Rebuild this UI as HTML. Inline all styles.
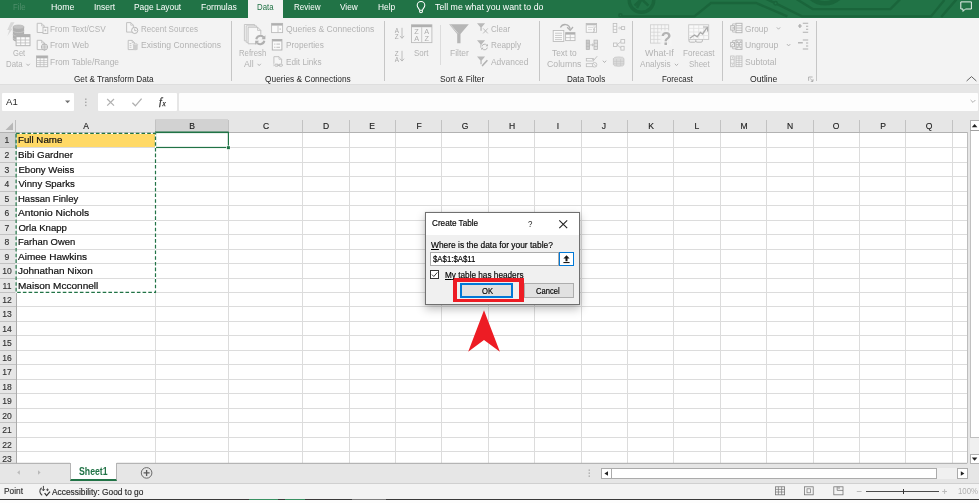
<!DOCTYPE html>
<html><head><meta charset="utf-8"><title>Excel</title>
<style>
html,body{margin:0;padding:0;background:#fff;}
body{width:979px;height:503px;overflow:hidden;position:relative;font-family:"Liberation Sans",sans-serif;}
#app{position:absolute;left:0;top:0;width:979px;height:503px;overflow:hidden;background:#e6e6e6;will-change:transform;}
.a{position:absolute;}
.t{position:absolute;white-space:nowrap;line-height:14px;height:14px;transform-origin:0 50%;}
u{text-decoration:underline;text-underline-offset:0.6px;text-decoration-thickness:0.8px;}
svg{position:absolute;overflow:visible;}
</style></head><body><div id="app">

<div class="a" style="left:0;top:0;width:979px;height:17.6px;background:#217346"></div>
<svg style="left:0;top:0" width="979" height="18" viewBox="0 0 979 18" fill="none">
<g stroke="#1a653b" stroke-width="2.4">
<circle cx="641.5" cy="0" r="12.3" stroke-width="3.4"/>
<path d="M634.6 5.6 L641.5 -1 L648.4 5.6 M641.5 -1 L637 8" stroke-width="2.6"/>
<circle cx="620.4" cy="15.3" r="1.5" stroke-width="1.6"/>
<path d="M622 16.4 H694.4 L711 3 H756 L787.4 16.4"/>
<circle cx="775.6" cy="3.3" r="1.7" stroke-width="1.5"/>
<path d="M764 -2 L774.2 2.6 M777.2 4.2 L802 16.4 H931 L944.4 0"/>
<path d="M796.4 -1 L812.7 9.1 H890.4 L900 -0.6"/>
<circle cx="825" cy="-18.1" r="21.4" stroke-width="4.6"/>
<path d="M941.2 17 L956.4 -0.6"/>
</g>
<!-- lightbulb -->
<g stroke="#fff" stroke-width="1.05" stroke-linejoin="round">
<path d="M419.5 10.3 C419.5 8.7 417.2 7.9 417.2 5.3 A3.8 3.8 0 0 1 424.8 5.3 C424.8 7.9 422.5 8.7 422.5 10.3 Z"/>
<path d="M419.6 10.4 V11.5 Q419.6 12.7 421 12.7 Q422.4 12.7 422.4 11.5 V10.4"/>
</g>
<!-- comments icon -->
<path d="M960.8 1.9 H971.4 V9 H965.4 L963 11.4 V9 H960.8 Z" stroke="#fff" stroke-width="0.9"/>
</svg>

<div class="a" style="left:0;top:18px;width:979px;height:67px;background:#f3f3f3"></div>
<div class="a" style="left:0;top:84px;width:979px;height:1px;background:#dedede"></div>
<div class="a" style="left:247.5px;top:0;width:35.5px;height:18.5px;background:#f3f3f3"></div>
<div class="a" style="left:231.0px;top:21px;width:1px;height:60px;background:#c6c6c6"></div>
<div class="a" style="left:384.1px;top:21px;width:1px;height:60px;background:#c6c6c6"></div>
<div class="a" style="left:539.1px;top:21px;width:1px;height:60px;background:#c6c6c6"></div>
<div class="a" style="left:632.0px;top:21px;width:1px;height:60px;background:#c6c6c6"></div>
<div class="a" style="left:721.9px;top:21px;width:1px;height:60px;background:#c6c6c6"></div>
<div class="a" style="left:816.1px;top:21px;width:1px;height:60px;background:#c6c6c6"></div>
<div class="a" style="left:440px;top:25px;width:1px;height:40px;background:#dcdcdc"></div>
<div class="a" style="left:2px;top:93px;width:72px;height:18px;background:#fff;border-radius:1px"></div>
<div class="a" style="left:97.5px;top:93px;width:79px;height:18px;background:#fff;border-radius:1px"></div>
<div class="a" style="left:179px;top:93px;width:799px;height:18px;background:#fdfdfd;border-radius:1px"></div>
<svg style="left:0;top:0" width="979" height="130" viewBox="0 0 979 130" fill="none">
<!-- name box dropdown -->
<path d="M65 100.5 H70.2 L67.6 103.3 Z" fill="#707070"/>
<!-- dots -->
<rect x="85.1" y="98.5" width="1.4" height="1.4" fill="#a4a4a4"/><rect x="85.1" y="101.6" width="1.4" height="1.4" fill="#a4a4a4"/><rect x="85.1" y="104.7" width="1.4" height="1.4" fill="#a4a4a4"/>
<!-- X -->
<path d="M107.2 99 L114 105.6 M114 99 L107.2 105.6" stroke="#b0b0b0" stroke-width="1.2"/>
<!-- check -->
<path d="M132.4 102.8 L135.4 105.8 L141.6 98.6" stroke="#b0b0b0" stroke-width="1.3"/>
<!-- fx -->
<text x="159" y="105.2" font-family="Liberation Serif, serif" font-style="italic" font-size="10.5" fill="#333" stroke="#333" stroke-width="0.25">f</text>
<text x="162.6" y="106" font-family="Liberation Serif, serif" font-style="italic" font-size="7.2" fill="#333" stroke="#333" stroke-width="0.25">x</text>
<!-- formula expand chevron -->
<path d="M970.6 100 L973 102.4 L975.4 100" stroke="#9a9a9a" stroke-width="0.8"/>
</svg>

<div class="a" style="left:16.3px;top:132.5px;width:950.7px;height:330.8px;background:#fff"></div>
<div class="a" style="left:155px;top:118.5px;width:73.4px;height:13.5px;background:#d2d2d2"></div>
<div class="a" style="left:0;top:133.3px;width:16px;height:14.47px;background:#d2d2d2"></div>
<div class="a" style="left:16.6px;top:133.8px;width:138.2px;height:13.870000000000001px;background:#ffd966"></div>
<svg class="a" style="left:0;top:0" width="979" height="503" viewBox="0 0 979 503">
<rect x="16.3" y="147" width="950.7" height="1" fill="#dcdcdc"/>
<rect x="0" y="147" width="16.3" height="1" fill="#c2c2c2"/>
<rect x="16.3" y="162" width="950.7" height="1" fill="#dcdcdc"/>
<rect x="0" y="162" width="16.3" height="1" fill="#c2c2c2"/>
<rect x="16.3" y="176" width="950.7" height="1" fill="#dcdcdc"/>
<rect x="0" y="176" width="16.3" height="1" fill="#c2c2c2"/>
<rect x="16.3" y="191" width="950.7" height="1" fill="#dcdcdc"/>
<rect x="0" y="191" width="16.3" height="1" fill="#c2c2c2"/>
<rect x="16.3" y="205" width="950.7" height="1" fill="#dcdcdc"/>
<rect x="0" y="205" width="16.3" height="1" fill="#c2c2c2"/>
<rect x="16.3" y="220" width="950.7" height="1" fill="#dcdcdc"/>
<rect x="0" y="220" width="16.3" height="1" fill="#c2c2c2"/>
<rect x="16.3" y="234" width="950.7" height="1" fill="#dcdcdc"/>
<rect x="0" y="234" width="16.3" height="1" fill="#c2c2c2"/>
<rect x="16.3" y="249" width="950.7" height="1" fill="#dcdcdc"/>
<rect x="0" y="249" width="16.3" height="1" fill="#c2c2c2"/>
<rect x="16.3" y="263" width="950.7" height="1" fill="#dcdcdc"/>
<rect x="0" y="263" width="16.3" height="1" fill="#c2c2c2"/>
<rect x="16.3" y="278" width="950.7" height="1" fill="#dcdcdc"/>
<rect x="0" y="278" width="16.3" height="1" fill="#c2c2c2"/>
<rect x="16.3" y="292" width="950.7" height="1" fill="#dcdcdc"/>
<rect x="0" y="292" width="16.3" height="1" fill="#c2c2c2"/>
<rect x="16.3" y="306" width="950.7" height="1" fill="#dcdcdc"/>
<rect x="0" y="306" width="16.3" height="1" fill="#c2c2c2"/>
<rect x="16.3" y="321" width="950.7" height="1" fill="#dcdcdc"/>
<rect x="0" y="321" width="16.3" height="1" fill="#c2c2c2"/>
<rect x="16.3" y="335" width="950.7" height="1" fill="#dcdcdc"/>
<rect x="0" y="335" width="16.3" height="1" fill="#c2c2c2"/>
<rect x="16.3" y="350" width="950.7" height="1" fill="#dcdcdc"/>
<rect x="0" y="350" width="16.3" height="1" fill="#c2c2c2"/>
<rect x="16.3" y="364" width="950.7" height="1" fill="#dcdcdc"/>
<rect x="0" y="364" width="16.3" height="1" fill="#c2c2c2"/>
<rect x="16.3" y="379" width="950.7" height="1" fill="#dcdcdc"/>
<rect x="0" y="379" width="16.3" height="1" fill="#c2c2c2"/>
<rect x="16.3" y="393" width="950.7" height="1" fill="#dcdcdc"/>
<rect x="0" y="393" width="16.3" height="1" fill="#c2c2c2"/>
<rect x="16.3" y="408" width="950.7" height="1" fill="#dcdcdc"/>
<rect x="0" y="408" width="16.3" height="1" fill="#c2c2c2"/>
<rect x="16.3" y="422" width="950.7" height="1" fill="#dcdcdc"/>
<rect x="0" y="422" width="16.3" height="1" fill="#c2c2c2"/>
<rect x="16.3" y="437" width="950.7" height="1" fill="#dcdcdc"/>
<rect x="0" y="437" width="16.3" height="1" fill="#c2c2c2"/>
<rect x="16.3" y="451" width="950.7" height="1" fill="#dcdcdc"/>
<rect x="0" y="451" width="16.3" height="1" fill="#c2c2c2"/>
<rect x="155" y="132.5" width="1" height="330.8" fill="#dcdcdc"/>
<rect x="155" y="120" width="1" height="12" fill="#c2c2c2"/>
<rect x="228" y="132.5" width="1" height="330.8" fill="#dcdcdc"/>
<rect x="228" y="120" width="1" height="12" fill="#c2c2c2"/>
<rect x="302" y="132.5" width="1" height="330.8" fill="#dcdcdc"/>
<rect x="302" y="120" width="1" height="12" fill="#c2c2c2"/>
<rect x="349" y="132.5" width="1" height="330.8" fill="#dcdcdc"/>
<rect x="349" y="120" width="1" height="12" fill="#c2c2c2"/>
<rect x="395" y="132.5" width="1" height="330.8" fill="#dcdcdc"/>
<rect x="395" y="120" width="1" height="12" fill="#c2c2c2"/>
<rect x="441" y="132.5" width="1" height="330.8" fill="#dcdcdc"/>
<rect x="441" y="120" width="1" height="12" fill="#c2c2c2"/>
<rect x="488" y="132.5" width="1" height="330.8" fill="#dcdcdc"/>
<rect x="488" y="120" width="1" height="12" fill="#c2c2c2"/>
<rect x="534" y="132.5" width="1" height="330.8" fill="#dcdcdc"/>
<rect x="534" y="120" width="1" height="12" fill="#c2c2c2"/>
<rect x="581" y="132.5" width="1" height="330.8" fill="#dcdcdc"/>
<rect x="581" y="120" width="1" height="12" fill="#c2c2c2"/>
<rect x="627" y="132.5" width="1" height="330.8" fill="#dcdcdc"/>
<rect x="627" y="120" width="1" height="12" fill="#c2c2c2"/>
<rect x="673" y="132.5" width="1" height="330.8" fill="#dcdcdc"/>
<rect x="673" y="120" width="1" height="12" fill="#c2c2c2"/>
<rect x="720" y="132.5" width="1" height="330.8" fill="#dcdcdc"/>
<rect x="720" y="120" width="1" height="12" fill="#c2c2c2"/>
<rect x="766" y="132.5" width="1" height="330.8" fill="#dcdcdc"/>
<rect x="766" y="120" width="1" height="12" fill="#c2c2c2"/>
<rect x="813" y="132.5" width="1" height="330.8" fill="#dcdcdc"/>
<rect x="813" y="120" width="1" height="12" fill="#c2c2c2"/>
<rect x="859" y="132.5" width="1" height="330.8" fill="#dcdcdc"/>
<rect x="859" y="120" width="1" height="12" fill="#c2c2c2"/>
<rect x="905" y="132.5" width="1" height="330.8" fill="#dcdcdc"/>
<rect x="905" y="120" width="1" height="12" fill="#c2c2c2"/>
<rect x="952" y="132.5" width="1" height="330.8" fill="#dcdcdc"/>
<rect x="952" y="120" width="1" height="12" fill="#c2c2c2"/>
<rect x="15" y="120" width="1" height="12" fill="#bdbdbd"/>
<rect x="0" y="132" width="967.0" height="1" fill="#b2b2b2"/>
<rect x="16" y="132" width="1" height="331.3" fill="#ababab"/>
<rect x="967" y="132" width="1" height="331.3" fill="#bdbdbd"/>
<rect x="0" y="462.8" width="70" height="1" fill="#a9a9a9"/>
<rect x="116.7" y="462.8" width="850.3" height="1" fill="#a9a9a9"/>
<path d="M13 122.5 L13 130 L5.5 130 Z" fill="#b7b7b7"/>
<rect x="155" y="131.6" width="73.4" height="1.5" fill="#217346"/>
<rect x="15.2" y="133.3" width="1.4" height="14.47" fill="#217346"/>
<rect x="155.5" y="132.4" width="72.9" height="15.07" fill="none" stroke="#217346" stroke-width="1.2"/>
<rect x="226.2" y="145.57000000000002" width="4" height="4" fill="#fff"/>
<rect x="226.9" y="146.17000000000002" width="3" height="3" fill="#217346"/>
<path d="M16.1 133.4 H155.5 V292.47 H16.1 Z" fill="none" stroke="#fff" stroke-width="1.2"/>
<path d="M16.1 133.4 H155.5 V292.47 H16.1 Z" fill="none" stroke="#217346" stroke-width="1.2" stroke-dasharray="3.6 2.1"/>
</svg>
<div class="a" style="left:970px;top:120px;width:9px;height:343.5px;background:#f0f0f0"></div>
<div class="a" style="left:970px;top:120px;width:11px;height:11px;background:#fff;border:1px solid #b0b0b0;border-bottom:1.5px solid #a0a0a0;box-sizing:border-box"></div>
<div class="a" style="left:970px;top:131px;width:11px;height:307px;background:#fff;border:1px solid #c0c0c0;border-top:none;box-sizing:border-box"></div>
<div class="a" style="left:970px;top:453.5px;width:11px;height:10px;background:#fff;border:1px solid #b0b0b0;box-sizing:border-box"></div>
<svg style="left:970px;top:120px" width="9" height="11"><path d="M1.8 7.3 L7.4 7.3 L4.6 3.9 Z" fill="#222"/></svg>
<svg style="left:970px;top:453.5px" width="9" height="10"><path d="M1.8 3.4 L7.4 3.4 L4.6 6.8 Z" fill="#222"/></svg>
<div class="a" style="left:0;top:463.8px;width:979px;height:19px;background:#e6e6e6"></div>
<div class="a" style="left:70px;top:463px;width:47px;height:18px;background:#fff;border-bottom:2px solid #217346;border-left:1px solid #b4b4b4;border-right:1px solid #b4b4b4;box-sizing:border-box"></div>
<div class="a" style="left:601px;top:468px;width:10.5px;height:11px;background:#fff;border:1px solid #ababab;box-sizing:border-box"></div>
<div class="a" style="left:611px;top:468px;width:325.5px;height:11px;background:#fff;border:1px solid #ababab;box-sizing:border-box"></div>
<div class="a" style="left:957px;top:468px;width:10.5px;height:11px;background:#fff;border:1px solid #ababab;box-sizing:border-box"></div>
<div class="a" style="left:936.5px;top:468px;width:20.5px;height:11px;background:#f0f0f0"></div>
<svg style="left:601px;top:468px" width="11" height="11"><path d="M7 3.2 L7 7.8 L3.4 5.5 Z" fill="#222"/></svg>
<svg style="left:957px;top:468px" width="11" height="11"><path d="M3.8 3.2 L3.8 7.8 L7.4 5.5 Z" fill="#222"/></svg>
<div class="a" style="left:0;top:483px;width:979px;height:16px;background:#f3f3f3;border-top:1px solid #d0d0d0;box-sizing:border-box"></div>
<div class="a" style="left:0;top:498.6px;width:979px;height:1.3px;background:#3a3a3a"></div>
<div class="a" style="left:0;top:499.9px;width:979px;height:4px;background:#fdfdfd"></div>
<div class="a" style="left:249.3px;top:498.6px;width:28.5px;height:1.3px;background:#3a9163"></div>
<div class="a" style="left:284.8px;top:498.6px;width:20.6px;height:1.3px;background:#3a9163"></div>
<div class="a" style="left:352px;top:498.6px;width:34px;height:1.3px;background:#7d7d7d"></div>
<svg style="left:0;top:440px" width="979" height="63" viewBox="0 440 979 63" fill="none">
<!-- sheet nav arrows -->
<path d="M19.8 470.2 V474.8 L17.2 472.5 Z" fill="#b9b9b9"/>
<path d="M38 470.2 V474.8 L40.6 472.5 Z" fill="#b9b9b9"/>
<!-- add sheet -->
<circle cx="146.6" cy="472.9" r="5.3" stroke="#6a6a6a" stroke-width="1"/>
<path d="M143.6 472.9 H149.6 M146.6 469.9 V475.9" stroke="#5a5a5a" stroke-width="1.3"/>
<!-- splitter dots -->
<rect x="588.7" y="469.4" width="1" height="1.6" fill="#a0a0a0"/><rect x="588.7" y="472.4" width="1" height="1.6" fill="#a0a0a0"/><rect x="588.7" y="475.4" width="1" height="1.6" fill="#a0a0a0"/>
<!-- accessibility icon -->
<path d="M41.6 487.8 A4.4 4.4 0 0 0 42.2 495.2" stroke="#444" stroke-width="1.1"/>
<path d="M43.4 485.9 V490.6 M41.9 489.2 L43.4 490.8 L44.9 489.2" stroke="#444" stroke-width="1"/>
<path d="M46.2 489.8 H48.8 M47.5 488.5 V491.1" stroke="#444" stroke-width="0.9"/>
<path d="M44.6 493.2 L46.6 495.6 L50 491.6" stroke="#333" stroke-width="1.2"/>
<!-- view icons -->
<rect x="775.4" y="486.8" width="9.2" height="8" stroke="#777" stroke-width="0.8"/>
<path d="M775.4 489.4 h9.2 M775.4 492 h9.2 M778.4 486.8 v8 M781.6 486.8 v8" stroke="#777" stroke-width="0.7"/>
<rect x="804.4" y="486.8" width="8.8" height="8" stroke="#777" stroke-width="0.8"/>
<rect x="807" y="488.8" width="3.6" height="4" stroke="#777" stroke-width="0.7"/>
<rect x="833.8" y="486.8" width="9.2" height="8" stroke="#777" stroke-width="0.8"/>
<path d="M837.2 486.8 V490.4 H843 M839 486.8 V489" stroke="#777" stroke-width="0.8"/>
<!-- zoom slider -->
<path d="M856.8 491.5 H861.6" stroke="#bbbbbb" stroke-width="1"/>
<path d="M866 491.5 H939" stroke="#4a4a4a" stroke-width="1"/>
<path d="M903.5 489 V494" stroke="#333" stroke-width="1"/>
<path d="M942.2 491.5 H947 M944.6 489.1 V493.9" stroke="#bbbbbb" stroke-width="1"/>
</svg>

<svg style="left:0;top:0" width="979" height="503" viewBox="0 0 979 503" fill="none" stroke-linejoin="miter">
<path d="M10.8 22.2 H14.5 L10.9 28.4 H12.8 L7.4 35.9 L9.3 30 H7.2 Z" fill="#d9d9d9"/>
<path d="M12.9 27 V39.6 A5.6 2 0 0 0 24.1 39.6 V27 Z" fill="#b0b0b0"/>
<ellipse cx="18.5" cy="27" rx="5.6" ry="2" fill="#c4c4c4" stroke="#b0b0b0" stroke-width="0.6"/>
<path d="M12.9 30.6 A5.6 2 0 0 0 24.1 30.6" stroke="#cfcfcf" stroke-width="0.7"/>
<path d="M12.9 34.2 A5.6 2 0 0 0 24.1 34.2" stroke="#cfcfcf" stroke-width="0.7"/>
<path d="M12.9 37.8 A5.6 2 0 0 0 24.1 37.8" stroke="#cfcfcf" stroke-width="0.7"/>
<rect x="16.1" y="34.6" width="13.9" height="11.1" fill="#fbfbfb" stroke="#b0b0b0" stroke-width="0.9"/>
<rect x="16.1" y="34.6" width="13.9" height="2.6" fill="#b0b0b0"/>
<path d="M16.1 40 H30 M16.1 42.9 H30 M20.7 37 V45.7 M25.3 37 V45.7" stroke="#bcbcbc" stroke-width="0.8"/>
<path d="M26.450000000000003 63.800000000000004 L28.1 65.60000000000001 L29.75 63.800000000000004" stroke="#b0b0b0" stroke-width="0.95"/>
<path d="M37.2 23.3 H41.6 L44.2 25.900000000000002 V32.5 H37.2 Z" stroke="#bcbcbc" stroke-width="0.9" fill="#f6f6f6"/><path d="M41.6 23.3 V25.900000000000002 H44.2" stroke="#bcbcbc" stroke-width="0.7200000000000001"/>
<rect x="43" y="27.3" width="4.8" height="6.2" fill="#f6f6f6" stroke="#bcbcbc" stroke-width="0.9"/>
<rect x="44.6" y="29.4" width="1.6" height="1.8" fill="#bcbcbc"/>
<path d="M37.2 40.3 H41.6 L44.2 42.9 V49.6 H37.2 Z" stroke="#bcbcbc" stroke-width="0.9" fill="#f6f6f6"/><path d="M41.6 40.3 V42.9 H44.2" stroke="#bcbcbc" stroke-width="0.7200000000000001"/>
<circle cx="44.5" cy="47" r="3.1" fill="#f6f6f6" stroke="#b0b0b0" stroke-width="0.9"/>
<path d="M41.4 47 H47.6 M44.5 43.9 V50.1" stroke="#b0b0b0" stroke-width="0.6"/>
<ellipse cx="44.5" cy="47" rx="1.4" ry="3.1" stroke="#b0b0b0" stroke-width="0.5"/>
<rect x="36.5" y="55.9" width="11.2" height="10.8" fill="#fafafa" stroke="#bcbcbc" stroke-width="0.9"/>
<rect x="36.5" y="55.9" width="11.2" height="2.4" fill="#b0b0b0"/>
<path d="M36.5 60.6 H47.7 M36.5 62.6 H47.7 M36.5 64.6 H47.7 M40.2 58 V66.7 M43.9 58 V66.7" stroke="#bcbcbc" stroke-width="0.7"/>
<path d="M126.6 22.6 H130.8 L133.4 25.200000000000003 V32.1 H126.6 Z" stroke="#bcbcbc" stroke-width="0.9" fill="#f6f6f6"/><path d="M130.8 22.6 V25.200000000000003 H133.4" stroke="#bcbcbc" stroke-width="0.7200000000000001"/>
<circle cx="134.7" cy="30.4" r="3.1" fill="#f6f6f6" stroke="#b0b0b0" stroke-width="0.9"/>
<path d="M134.7 28.4 V30.6 H136.6" stroke="#b0b0b0" stroke-width="0.8"/>
<path d="M128.2 40.4 H132.20000000000002 L134.4 42.6 V49.6 H128.2 Z" stroke="#bcbcbc" stroke-width="0.9" fill="#f6f6f6"/><path d="M132.20000000000002 40.4 V42.6 H134.4" stroke="#bcbcbc" stroke-width="0.7200000000000001"/>
<path d="M129.6 43.5 H131.4 M129.6 45.4 H131.4 M129.6 47.3 H131.4" stroke="#bcbcbc" stroke-width="0.8"/>
<path d="M133.1 44.6 V49.2 A2.3 1 0 0 0 137.7 49.2 V44.6 Z" fill="#cdcdcd"/>
<ellipse cx="135.4" cy="44.6" rx="2.3" ry="1" fill="#dcdcdc" stroke="#c4c4c4" stroke-width="0.5"/>
<path d="M244.4 24.5 H254.6 V40.8 H244.4 Z" stroke="#bcbcbc" stroke-width="0.8" fill="#f6f6f6"/>
<path d="M246.2 25.8 H256.4 V42.3 H246.2 Z" stroke="#bcbcbc" stroke-width="0.8" fill="#f6f6f6"/>
<path d="M248.1 27.2 H257.6 L260.8 30.4 V43.8 H248.1 Z" stroke="#bcbcbc" stroke-width="0.9" fill="#f6f6f6"/>
<path d="M257.6 27.2 V30.4 H260.8" stroke="#bcbcbc" stroke-width="0.8"/>
<circle cx="260.3" cy="40" r="5.6" fill="#f3f3f3"/>
<path d="M256.3 39.2 A4.1 4.1 0 0 1 263.6 37.4" stroke="#b0b0b0" stroke-width="2.1"/>
<path d="M264.3 40.8 A4.1 4.1 0 0 1 257 42.6" stroke="#b0b0b0" stroke-width="2.1"/>
<path d="M265.4 35.3 V39.2 H261.5 Z" fill="#b0b0b0"/>
<path d="M255.2 44.7 V40.8 H259.1 Z" fill="#b0b0b0"/>
<path d="M257.55 63.800000000000004 L259.2 65.60000000000001 L260.84999999999997 63.800000000000004" stroke="#b0b0b0" stroke-width="0.95"/>
<rect x="271.6" y="23.4" width="11" height="9.2" fill="#fafafa" stroke="#bcbcbc" stroke-width="0.9"/>
<rect x="271.6" y="23.4" width="11" height="2.2" fill="#b0b0b0"/>
<path d="M278 25.6 V32.6" stroke="#bcbcbc" stroke-width="0.8"/>
<rect x="279.4" y="28.3" width="1.6" height="1.6" fill="#d2d2d2"/>
<rect x="272.3" y="39.5" width="9.6" height="10.5" fill="#fafafa" stroke="#b0b0b0" stroke-width="0.9"/>
<rect x="272.3" y="39.5" width="9.6" height="1.9" fill="#b0b0b0"/>
<path d="M274.2 44.1 h1.2 M276.4 44.1 H280 M274.2 47.3 h1.2 M276.4 47.3 H280" stroke="#b0b0b0" stroke-width="0.8"/>
<path d="M273.9 56.7 H279.0 L281.6 59.300000000000004 V66.2 H273.9 Z" stroke="#bcbcbc" stroke-width="0.9" fill="#f6f6f6"/><path d="M279.0 56.7 V59.300000000000004 H281.6" stroke="#bcbcbc" stroke-width="0.7200000000000001"/>
<rect x="273.6" y="63.6" width="9.6" height="3.4" fill="#f3f3f3"/>
<rect x="274.7" y="64.2" width="3.6" height="2" rx="1" stroke="#b0b0b0" stroke-width="0.8"/>
<rect x="278.9" y="64.2" width="3.6" height="2" rx="1" stroke="#b0b0b0" stroke-width="0.8"/>
<path d="M277.3 65.2 H280" stroke="#b0b0b0" stroke-width="0.8"/>
<text x="396.8" y="32.8" font-family="Liberation Sans, sans-serif" font-size="6.3" fill="#a9a9a9" text-anchor="middle" font-weight="normal" stroke="none">A</text>
<text x="396.8" y="38.8" font-family="Liberation Sans, sans-serif" font-size="6.3" fill="#a9a9a9" text-anchor="middle" font-weight="normal" stroke="none">Z</text>
<path d="M402 27.8 V38.2 M399.9 35.9 L402 38.3 L404.1 35.9" stroke="#b0b0b0" stroke-width="0.8"/>
<text x="396.8" y="55.6" font-family="Liberation Sans, sans-serif" font-size="6.3" fill="#a9a9a9" text-anchor="middle" font-weight="normal" stroke="none">Z</text>
<text x="396.8" y="61.6" font-family="Liberation Sans, sans-serif" font-size="6.3" fill="#a9a9a9" text-anchor="middle" font-weight="normal" stroke="none">A</text>
<path d="M402 50.8 V61 M399.9 58.7 L402 61.1 L404.1 58.7" stroke="#b0b0b0" stroke-width="0.8"/>
<rect x="411.5" y="24.8" width="20.4" height="17.8" fill="#f5f5f5" stroke="#bcbcbc" stroke-width="0.9"/>
<rect x="411.5" y="24.8" width="20.4" height="2.4" fill="#b0b0b0"/>
<path d="M421.7 27.2 V42.6" stroke="#bcbcbc" stroke-width="0.8"/>
<text x="416.6" y="34.2" font-family="Liberation Sans, sans-serif" font-size="7.3" fill="#adadad" text-anchor="middle" font-weight="normal" stroke="none">Z</text>
<text x="416.6" y="41.0" font-family="Liberation Sans, sans-serif" font-size="7.3" fill="#adadad" text-anchor="middle" font-weight="normal" stroke="none">A</text>
<text x="426.8" y="34.2" font-family="Liberation Sans, sans-serif" font-size="7.3" fill="#adadad" text-anchor="middle" font-weight="normal" stroke="none">A</text>
<text x="426.8" y="41.0" font-family="Liberation Sans, sans-serif" font-size="7.3" fill="#adadad" text-anchor="middle" font-weight="normal" stroke="none">Z</text>
<path d="M449.1 24.2 H468.8 L460.5 33.9 V43.2 H457.2 V33.9 Z" fill="#b6b6b6"/>
<path d="M450.4 24.6 L458 33.4" stroke="#e4e4e4" stroke-width="0.7"/>
<path d="M477 23.2 H485.1 L481.7 27.2 V30.799999999999997 H480.4 V27.2 Z" fill="#b9b9b9"/>
<path d="M477 40.2 H485.1 L481.7 44.2 V47.800000000000004 H480.4 V44.2 Z" fill="#b9b9b9"/>
<path d="M477 56.6 H485.1 L481.7 60.6 V64.2 H480.4 V60.6 Z" fill="#b9b9b9"/>
<path d="M483.2 28.4 L487.8 33.4 M487.8 28.4 L483.2 33.4" stroke="#b0b0b0" stroke-width="0.8"/>
<circle cx="484.6" cy="47" r="3.6" fill="#f3f3f3"/>
<path d="M481.9 46.4 A2.8 2.8 0 0 1 486.9 45.3" stroke="#b0b0b0" stroke-width="0.9"/><path d="M487.3 47.6 A2.8 2.8 0 0 1 482.3 48.7" stroke="#b0b0b0" stroke-width="0.9"/>
<path d="M487.9 43.9 V46.2 H485.6 Z M481.3 50.1 V47.8 H483.6 Z" fill="#b0b0b0"/>
<path d="M487.4 60.2 L483 64.9 L482.2 66.2" stroke="#b0b0b0" stroke-width="1.5"/>
<rect x="553.2" y="30.5" width="10.6" height="11" fill="#fafafa" stroke="#bcbcbc" stroke-width="0.9"/>
<path d="M555 33.2 H562 M555 35.4 H562 M555 37.6 H562 M555 39.6 H562" stroke="#bcbcbc" stroke-width="0.8"/>
<rect x="565.6" y="32.6" width="9.4" height="8" fill="#fafafa" stroke="#bcbcbc" stroke-width="0.9"/>
<rect x="565.6" y="32.6" width="9.4" height="2" fill="#b0b0b0"/>
<path d="M570.3 34.6 V40.6 M565.6 37.6 H575" stroke="#bcbcbc" stroke-width="0.7"/>
<path d="M560.4 27.6 C562.5 23.2 569.6 23.2 570.2 29.6" stroke="#b0b0b0" stroke-width="1.25"/>
<path d="M567.2 27.2 L570.2 30.4 L573 27" stroke="#b0b0b0" stroke-width="1.25"/>
<rect x="586.2" y="23.5" width="10.4" height="8.8" fill="#f9f9f9" stroke="#bcbcbc" stroke-width="0.8"/>
<rect x="586.2" y="23.5" width="10.4" height="1.8" fill="#bcbcbc"/>
<path d="M588 27.4 H593 M588 29.6 H592 M594 25.5 V32.3" stroke="#d2d2d2" stroke-width="0.8"/>
<path d="M595.8 26.4 L593.4 29.6 H594.8 L593.2 32.8" stroke="#bcbcbc" stroke-width="0.8"/>
<rect x="586.2" y="40.1" width="3.4" height="9.5" fill="#c9c9c9" stroke="#b0b0b0" stroke-width="0.7"/>
<rect x="594" y="40.1" width="3.4" height="9.5" fill="#e2e2e2" stroke="#b0b0b0" stroke-width="0.7"/>
<path d="M586.2 43.2 h3.4 M586.2 46.4 h3.4 M594 43.2 h3.4 M594 46.4 h3.4" stroke="#b0b0b0" stroke-width="0.6"/>
<path d="M590.2 44.9 H593.4 M592 43.6 L593.4 44.9 L592 46.2" stroke="#b0b0b0" stroke-width="0.7"/>
<rect x="586.3" y="58.4" width="7" height="2.6" stroke="#bcbcbc" stroke-width="0.8" fill="#f6f6f6"/>
<rect x="586.3" y="63.7" width="7" height="3" stroke="#bcbcbc" stroke-width="0.8" fill="#f6f6f6"/>
<path d="M592 58.6 L593.6 60.4 L597.2 56.2" stroke="#bcbcbc" stroke-width="0.9"/>
<circle cx="594.6" cy="64.8" r="2.3" stroke="#bcbcbc" stroke-width="0.8" fill="#f3f3f3"/><path d="M593 63.2 L596.2 66.4" stroke="#bcbcbc" stroke-width="0.7"/>
<path d="M602.85 60.7 L604.5 62.5 L606.15 60.7" stroke="#b0b0b0" stroke-width="0.95"/>
<rect x="613.2" y="23.5" width="3.6" height="8.9" stroke="#bcbcbc" stroke-width="0.8" fill="#f6f6f6"/>
<path d="M613.2 26.4 h3.6 M613.2 29.4 h3.6" stroke="#bcbcbc" stroke-width="0.7"/>
<path d="M618.2 28 H620.6 M619.6 27 L620.7 28 L619.6 29" stroke="#bcbcbc" stroke-width="0.7"/>
<rect x="621.6" y="26.7" width="3.1" height="2.7" stroke="#bcbcbc" stroke-width="0.8" fill="#f6f6f6"/>
<rect x="613.4" y="43" width="3.6" height="3.5" stroke="#bcbcbc" stroke-width="0.8" fill="#f6f6f6"/>
<rect x="620.9" y="39.6" width="3.8" height="3.5" stroke="#bcbcbc" stroke-width="0.8" fill="#f6f6f6"/>
<rect x="620.9" y="46.3" width="3.2" height="3.8" stroke="#bcbcbc" stroke-width="0.8" fill="#f6f6f6"/>
<path d="M617 44.8 L620.9 41.6 M617 44.8 L620.9 48" stroke="#bcbcbc" stroke-width="0.8"/>
<path d="M613.4 58.6 V64.6 A5.3 1.7 0 0 0 624 64.6 V58.6 A5.3 1.7 0 0 0 613.4 58.6 Z" fill="#dadada" stroke="#c2c2c2" stroke-width="0.7"/>
<path d="M616.6 59 V66 M620.6 59 V66 M613.6 61.4 H624 M613.6 63.8 H624" stroke="#c4c4c4" stroke-width="0.6"/>
<rect x="650.4" y="24.8" width="18.3" height="18.3" fill="#f6f6f6" stroke="#cdcdcd" stroke-width="0.8"/>
<path d="M650.4 28.6 H668.7 M650.4 32.2 H668.7 M650.4 35.8 H668.7 M650.4 39.4 H668.7 M654 24.8 V43.1 M657.7 24.8 V43.1 M661.4 24.8 V43.1 M665 24.8 V43.1" stroke="#d3d3d3" stroke-width="0.7"/>
<rect x="660.4" y="30.4" width="11.4" height="15.4" fill="#f4f4f4" opacity="0.85"/>
<text x="666.2" y="44.6" font-family="Liberation Sans, sans-serif" font-size="17.6" font-weight="bold" fill="#b3b3b3" text-anchor="middle" stroke="none">?</text>
<path d="M674.85 63.800000000000004 L676.5 65.60000000000001 L678.15 63.800000000000004" stroke="#b0b0b0" stroke-width="0.95"/>
<rect x="688.7" y="24.8" width="20" height="14.6" fill="#f9f9f9" stroke="#c6c6c6" stroke-width="0.9"/>
<path d="M688.7 28.4 H708.7 M688.7 32 H708.7 M688.7 35.6 H708.7 M693.7 24.8 V39.4 M698.7 24.8 V39.4 M703.7 24.8 V39.4" stroke="#dedede" stroke-width="0.7"/>
<path d="M689.8 38.2 L694.5 35 L697.2 36.8 L700.4 32.4 L702.6 34 L707 27.6" stroke="#ababab" stroke-width="1.35"/>
<path d="M703.2 27 H707.6 V31.4" stroke="#ababab" stroke-width="1.2"/>
<path d="M689 39.4 V41 Q689 42.2 690.2 42.2 H694.6 Q695.8 42.2 695.8 41 V39.4 M695.8 41 Q695.8 42.2 697 42.2 H701 Q702.4 42.2 702.4 41 V39.4" stroke="#b8b8b8" stroke-width="0.95"/>
<rect x="736" y="23.3" width="6" height="9.4" fill="#f6f6f6" stroke="#b3b3b3" stroke-width="0.9"/><path d="M736 25.650000000000002 h6 M736 28.0 h6 M736 30.35 h6" stroke="#b3b3b3" stroke-width="0.8"/><rect x="730.7" y="25.7" width="3.8" height="4.4" fill="#f6f6f6" stroke="#b3b3b3" stroke-width="0.9"/><path d="M732.6 23.900000000000002 H736 M732.6 23.900000000000002 V25.7 M732.6 32.1 H736 M732.6 32.1 V30.1" stroke="#b3b3b3" stroke-width="0.7"/><path d="M731.6 27.9 h2 M732.8 26.900000000000002 l1 1 l-1 1" stroke="#b3b3b3" stroke-width="0.7"/>
<rect x="736" y="40" width="6" height="9.4" fill="#f6f6f6" stroke="#b3b3b3" stroke-width="0.9"/><path d="M736 42.35 h6 M736 44.7 h6 M736 47.05 h6" stroke="#b3b3b3" stroke-width="0.8"/><rect x="730.7" y="42.4" width="3.8" height="4.4" fill="#f6f6f6" stroke="#b3b3b3" stroke-width="0.9"/><path d="M732.6 40.6 H736 M732.6 40.6 V42.4 M732.6 48.8 H736 M732.6 48.8 V46.8" stroke="#b3b3b3" stroke-width="0.7"/><path d="M731.6 45.8 l2 -2.4" stroke="#b3b3b3" stroke-width="0.8"/><path d="M737 40.8 l4 7.8 M741 40.8 l-4 7.8" stroke="#b3b3b3" stroke-width="0.7"/>
<path d="M776.85 27.400000000000002 L778.5 29.2 L780.15 27.400000000000002" stroke="#b0b0b0" stroke-width="0.95"/>
<path d="M786.95 44.1 L788.6 45.9 L790.25 44.1" stroke="#b0b0b0" stroke-width="0.95"/>
<rect x="730.7" y="56" width="3.4" height="10.7" fill="#f6f6f6" stroke="#bcbcbc" stroke-width="0.8"/>
<path d="M730.7 59.6 h3.4 M730.7 63.2 h3.4" stroke="#bcbcbc" stroke-width="0.7"/>
<rect x="732" y="57.4" width="0.9" height="0.9" fill="#b0b0b0"/><rect x="732" y="64.4" width="0.9" height="0.9" fill="#b0b0b0"/>
<rect x="736" y="56" width="6" height="10.7" fill="#f6f6f6" stroke="#bcbcbc" stroke-width="0.8"/>
<path d="M736 58.1 h6 M736 60.3 h6 M736 62.4 h6 M736 64.6 h6 M739 56 v10.7" stroke="#bcbcbc" stroke-width="0.7"/>
<path d="M798 26 h3.8 M799.9 24.1 v3.8" stroke="#a8a8a8" stroke-width="1.2"/>
<path d="M802.8 23.2 H808.2 M806 26.3 H808.2 M806 29.3 H808.2 M802.8 32.3 H808.2" stroke="#b0b0b0" stroke-width="1.1"/>
<path d="M798 42.8 h4.8" stroke="#a8a8a8" stroke-width="1.2"/>
<path d="M802.8 40 H808.2 M806 43 H808.2 M806 46 H808.2 M802.8 49 H808.2" stroke="#b0b0b0" stroke-width="1.1"/>
<path d="M808.6 80.8 V77 H812.6" stroke="#9a9a9a" stroke-width="0.7"/><path d="M810.2 78.6 L813 81.4 M813 79.2 V81.4 H810.8" stroke="#9a9a9a" stroke-width="0.7"/>
<path d="M966.6 81 L971.5 76.6 L976.4 81" stroke="#555" stroke-width="0.9"/>
</svg>
<!-- dialog -->
<div class="a" style="left:425px;top:212px;width:155px;height:93px;background:#f0f0f0;border:1px solid #707070;box-sizing:border-box;box-shadow:0 4px 9px rgba(0,0,0,0.26),0 0 2px rgba(0,0,0,0.14)"></div>
<div class="a" style="left:426px;top:213px;width:153px;height:22px;background:#fff"></div>
<svg style="left:558.6px;top:219.5px" width="9" height="9" viewBox="0 0 9 9"><path d="M0.3 0.3 L8.2 8.2 M8.2 0.3 L0.3 8.2" stroke="#222" stroke-width="1.1" fill="none"/></svg>
<!-- input -->
<div class="a" style="left:430.3px;top:251.7px;width:129px;height:14.6px;background:#fff;border:1px solid #acacac;box-sizing:border-box"></div>
<div class="a" style="left:559.2px;top:251.7px;width:15px;height:14.6px;background:#fff;border:1px solid #0078d7;box-sizing:border-box"></div>
<svg style="left:559.2px;top:251.7px" width="15" height="14.6" viewBox="0 0 15 14.6"><path d="M7.5 3.2 L10.6 6.6 H8.5 V9.2 H6.5 V6.6 H4.4 Z" fill="#1a1a1a"/><rect x="4.4" y="10" width="6.2" height="1.1" fill="#1a1a1a"/></svg>
<!-- checkbox -->
<div class="a" style="left:430.3px;top:269.6px;width:9.2px;height:9.2px;background:#fff;border:1px solid #333;box-sizing:border-box"></div>
<svg style="left:430.3px;top:269.6px" width="9.2" height="9.2" viewBox="0 0 9.2 9.2"><path d="M2 4.6 L3.8 6.5 L7.3 2.5" stroke="#222" stroke-width="0.9" fill="none"/></svg>
<!-- red highlight -->
<div class="a" style="left:453.1px;top:278.1px;width:71px;height:23.7px;border-style:solid;border-color:#ed1c24;border-width:4.6px 5.2px 3.9px 4.6px;box-sizing:border-box"></div>
<!-- OK button -->
<div class="a" style="left:460.1px;top:282.8px;width:53.2px;height:15.2px;background:#e1e1e1;border:2px solid #0078d7;box-sizing:border-box"></div>
<!-- Cancel button -->
<div class="a" style="left:524.1px;top:283.2px;width:49.7px;height:15.1px;background:#e1e1e1;border:1px solid #adadad;box-sizing:border-box"></div>
<!-- red arrow -->
<svg style="left:0;top:0" width="979" height="503" viewBox="0 0 979 503"><path d="M484 310.2 L499.9 351.8 L484 340 L468.2 351.8 Z" fill="#ed1c24"/></svg>

<span class="t" id="t0" style="left:12.80px;top:-0.10px;font-size:9.4px;color:#4f8f6b;transform:scaleX(0.8273);">File</span>
<span class="t" id="t1" style="left:50.90px;top:-0.10px;font-size:9.4px;color:#ffffff;transform:scaleX(0.9394);">Home</span>
<span class="t" id="t2" style="left:93.80px;top:-0.10px;font-size:9.4px;color:#ffffff;transform:scaleX(0.9039);">Insert</span>
<span class="t" id="t3" style="left:134.40px;top:-0.10px;font-size:9.4px;color:#ffffff;transform:scaleX(0.8964);">Page Layout</span>
<span class="t" id="t4" style="left:201.00px;top:-0.10px;font-size:9.4px;color:#ffffff;transform:scaleX(0.9161);">Formulas</span>
<span class="t" id="t5" style="left:293.50px;top:-0.10px;font-size:9.4px;color:#ffffff;transform:scaleX(0.8618);">Review</span>
<span class="t" id="t6" style="left:339.50px;top:-0.10px;font-size:9.4px;color:#ffffff;transform:scaleX(0.8781);">View</span>
<span class="t" id="t7" style="left:377.80px;top:-0.10px;font-size:9.4px;color:#ffffff;transform:scaleX(0.8921);">Help</span>
<span class="t" id="t8" style="left:435.30px;top:-0.10px;font-size:9.4px;color:#ffffff;transform:scaleX(0.9370);">Tell me what you want to do</span>
<span class="t" id="t9" style="left:256.80px;top:-0.10px;font-size:9.4px;color:#217346;transform:scaleX(0.8328);">Data</span>
<span class="t" id="t10" style="left:50.00px;top:21.70px;font-size:9.2px;color:#b3b3b3;transform:scaleX(0.8982);">From Text/CSV</span>
<span class="t" id="t11" style="left:50.00px;top:38.00px;font-size:9.2px;color:#b3b3b3;transform:scaleX(0.9129);">From Web</span>
<span class="t" id="t12" style="left:50.00px;top:55.20px;font-size:9.2px;color:#b3b3b3;transform:scaleX(0.9149);">From Table/Range</span>
<span class="t" id="t13" style="left:140.70px;top:21.70px;font-size:9.2px;color:#b3b3b3;transform:scaleX(0.8719);">Recent Sources</span>
<span class="t" id="t14" style="left:140.70px;top:38.00px;font-size:9.2px;color:#b3b3b3;transform:scaleX(0.9336);">Existing Connections</span>
<span class="t" id="t15" style="left:285.70px;top:21.70px;font-size:9.2px;color:#b3b3b3;transform:scaleX(0.9345);">Queries &amp; Connections</span>
<span class="t" id="t16" style="left:285.70px;top:38.00px;font-size:9.2px;color:#b3b3b3;transform:scaleX(0.9027);">Properties</span>
<span class="t" id="t17" style="left:285.70px;top:55.20px;font-size:9.2px;color:#b3b3b3;transform:scaleX(0.8910);">Edit Links</span>
<span class="t" id="t18" style="left:490.70px;top:21.70px;font-size:9.2px;color:#b3b3b3;transform:scaleX(0.8694);">Clear</span>
<span class="t" id="t19" style="left:490.70px;top:38.00px;font-size:9.2px;color:#b3b3b3;transform:scaleX(0.8897);">Reapply</span>
<span class="t" id="t20" style="left:490.70px;top:55.20px;font-size:9.2px;color:#b3b3b3;transform:scaleX(0.9174);">Advanced</span>
<span class="t" id="t21" style="left:744.90px;top:21.70px;font-size:9.2px;color:#b3b3b3;transform:scaleX(0.9003);">Group</span>
<span class="t" id="t22" style="left:744.90px;top:38.00px;font-size:9.2px;color:#b3b3b3;transform:scaleX(0.9447);">Ungroup</span>
<span class="t" id="t23" style="left:744.90px;top:55.20px;font-size:9.2px;color:#b3b3b3;transform:scaleX(0.9283);">Subtotal</span>
<span class="t" id="t24" style="left:12.80px;top:46.25px;font-size:9.2px;color:#b3b3b3;transform:scaleX(0.8236);">Get</span>
<span class="t" id="t25" style="left:6.00px;top:57.05px;font-size:9.2px;color:#b3b3b3;transform:scaleX(0.8496);">Data</span>
<span class="t" id="t26" style="left:239.30px;top:46.25px;font-size:9.2px;color:#b3b3b3;transform:scaleX(0.8455);">Refresh</span>
<span class="t" id="t27" style="left:243.80px;top:57.05px;font-size:9.2px;color:#b3b3b3;transform:scaleX(0.9492);">All</span>
<span class="t" id="t28" style="left:414.40px;top:46.25px;font-size:9.2px;color:#b3b3b3;transform:scaleX(0.8601);">Sort</span>
<span class="t" id="t29" style="left:449.60px;top:46.25px;font-size:9.2px;color:#b3b3b3;transform:scaleX(0.9255);">Filter</span>
<span class="t" id="t30" style="left:552.10px;top:46.25px;font-size:9.2px;color:#b3b3b3;transform:scaleX(0.9122);">Text to</span>
<span class="t" id="t31" style="left:546.80px;top:57.05px;font-size:9.2px;color:#b3b3b3;transform:scaleX(0.9486);">Columns</span>
<span class="t" id="t32" style="left:645.30px;top:46.25px;font-size:9.2px;color:#b3b3b3;transform:scaleX(0.9727);">What-If</span>
<span class="t" id="t33" style="left:640.40px;top:57.05px;font-size:9.2px;color:#b3b3b3;transform:scaleX(0.8942);">Analysis</span>
<span class="t" id="t34" style="left:683.10px;top:46.25px;font-size:9.2px;color:#b3b3b3;transform:scaleX(0.8839);">Forecast</span>
<span class="t" id="t35" style="left:688.70px;top:57.05px;font-size:9.2px;color:#b3b3b3;transform:scaleX(0.8619);">Sheet</span>
<span class="t" id="t36" style="left:74.00px;top:72.00px;font-size:8.8px;color:#262626;transform:scaleX(0.9303);">Get &amp; Transform Data</span>
<span class="t" id="t37" style="left:265.00px;top:72.00px;font-size:8.8px;color:#262626;transform:scaleX(0.9484);">Queries &amp; Connections</span>
<span class="t" id="t38" style="left:439.80px;top:72.00px;font-size:8.8px;color:#262626;transform:scaleX(0.9540);">Sort &amp; Filter</span>
<span class="t" id="t39" style="left:566.80px;top:72.00px;font-size:8.8px;color:#262626;transform:scaleX(0.9226);">Data Tools</span>
<span class="t" id="t40" style="left:662.00px;top:72.00px;font-size:8.8px;color:#262626;transform:scaleX(0.9055);">Forecast</span>
<span class="t" id="t41" style="left:750.00px;top:72.00px;font-size:8.8px;color:#262626;transform:scaleX(0.9794);">Outline</span>
<span class="t" id="t42" style="left:5.80px;top:95.30px;font-size:9.8px;color:#262626;transform:scaleX(0.9763);">A1</span>
<span class="t" style="left:55.65px;width:60px;text-align:center;transform-origin:50% 50%;top:118.90px;font-size:9.0px;color:#222;transform:scaleX(0.95);-webkit-text-stroke:0.15px #222;">A</span>
<span class="t" style="left:161.70px;width:60px;text-align:center;transform-origin:50% 50%;top:118.90px;font-size:9.0px;color:#222;transform:scaleX(0.95);-webkit-text-stroke:0.15px #222;">B</span>
<span class="t" style="left:235.60px;width:60px;text-align:center;transform-origin:50% 50%;top:118.90px;font-size:9.0px;color:#222;transform:scaleX(0.95);-webkit-text-stroke:0.15px #222;">C</span>
<span class="t" style="left:296.00px;width:60px;text-align:center;transform-origin:50% 50%;top:118.90px;font-size:9.0px;color:#222;transform:scaleX(0.95);-webkit-text-stroke:0.15px #222;">D</span>
<span class="t" style="left:342.40px;width:60px;text-align:center;transform-origin:50% 50%;top:118.90px;font-size:9.0px;color:#222;transform:scaleX(0.95);-webkit-text-stroke:0.15px #222;">E</span>
<span class="t" style="left:388.80px;width:60px;text-align:center;transform-origin:50% 50%;top:118.90px;font-size:9.0px;color:#222;transform:scaleX(0.95);-webkit-text-stroke:0.15px #222;">F</span>
<span class="t" style="left:435.20px;width:60px;text-align:center;transform-origin:50% 50%;top:118.90px;font-size:9.0px;color:#222;transform:scaleX(0.95);-webkit-text-stroke:0.15px #222;">G</span>
<span class="t" style="left:481.60px;width:60px;text-align:center;transform-origin:50% 50%;top:118.90px;font-size:9.0px;color:#222;transform:scaleX(0.95);-webkit-text-stroke:0.15px #222;">H</span>
<span class="t" style="left:528.00px;width:60px;text-align:center;transform-origin:50% 50%;top:118.90px;font-size:9.0px;color:#222;transform:scaleX(0.95);-webkit-text-stroke:0.15px #222;">I</span>
<span class="t" style="left:574.40px;width:60px;text-align:center;transform-origin:50% 50%;top:118.90px;font-size:9.0px;color:#222;transform:scaleX(0.95);-webkit-text-stroke:0.15px #222;">J</span>
<span class="t" style="left:620.80px;width:60px;text-align:center;transform-origin:50% 50%;top:118.90px;font-size:9.0px;color:#222;transform:scaleX(0.95);-webkit-text-stroke:0.15px #222;">K</span>
<span class="t" style="left:667.20px;width:60px;text-align:center;transform-origin:50% 50%;top:118.90px;font-size:9.0px;color:#222;transform:scaleX(0.95);-webkit-text-stroke:0.15px #222;">L</span>
<span class="t" style="left:713.60px;width:60px;text-align:center;transform-origin:50% 50%;top:118.90px;font-size:9.0px;color:#222;transform:scaleX(0.95);-webkit-text-stroke:0.15px #222;">M</span>
<span class="t" style="left:760.00px;width:60px;text-align:center;transform-origin:50% 50%;top:118.90px;font-size:9.0px;color:#222;transform:scaleX(0.95);-webkit-text-stroke:0.15px #222;">N</span>
<span class="t" style="left:806.40px;width:60px;text-align:center;transform-origin:50% 50%;top:118.90px;font-size:9.0px;color:#222;transform:scaleX(0.95);-webkit-text-stroke:0.15px #222;">O</span>
<span class="t" style="left:852.80px;width:60px;text-align:center;transform-origin:50% 50%;top:118.90px;font-size:9.0px;color:#222;transform:scaleX(0.95);-webkit-text-stroke:0.15px #222;">P</span>
<span class="t" style="left:899.20px;width:60px;text-align:center;transform-origin:50% 50%;top:118.90px;font-size:9.0px;color:#222;transform:scaleX(0.95);-webkit-text-stroke:0.15px #222;">Q</span>
<span class="t" style="left:-23.10px;width:60px;text-align:center;transform-origin:50% 50%;top:132.95px;font-size:9.0px;color:#333;transform:scaleX(0.95);-webkit-text-stroke:0.15px #333;">1</span>
<span class="t" style="left:-23.10px;width:60px;text-align:center;transform-origin:50% 50%;top:147.95px;font-size:9.0px;color:#333;transform:scaleX(0.95);-webkit-text-stroke:0.15px #333;">2</span>
<span class="t" style="left:-23.10px;width:60px;text-align:center;transform-origin:50% 50%;top:162.95px;font-size:9.0px;color:#333;transform:scaleX(0.95);-webkit-text-stroke:0.15px #333;">3</span>
<span class="t" style="left:-23.10px;width:60px;text-align:center;transform-origin:50% 50%;top:176.95px;font-size:9.0px;color:#333;transform:scaleX(0.95);-webkit-text-stroke:0.15px #333;">4</span>
<span class="t" style="left:-23.10px;width:60px;text-align:center;transform-origin:50% 50%;top:191.95px;font-size:9.0px;color:#333;transform:scaleX(0.95);-webkit-text-stroke:0.15px #333;">5</span>
<span class="t" style="left:-23.10px;width:60px;text-align:center;transform-origin:50% 50%;top:205.95px;font-size:9.0px;color:#333;transform:scaleX(0.95);-webkit-text-stroke:0.15px #333;">6</span>
<span class="t" style="left:-23.10px;width:60px;text-align:center;transform-origin:50% 50%;top:220.95px;font-size:9.0px;color:#333;transform:scaleX(0.95);-webkit-text-stroke:0.15px #333;">7</span>
<span class="t" style="left:-23.10px;width:60px;text-align:center;transform-origin:50% 50%;top:234.95px;font-size:9.0px;color:#333;transform:scaleX(0.95);-webkit-text-stroke:0.15px #333;">8</span>
<span class="t" style="left:-23.10px;width:60px;text-align:center;transform-origin:50% 50%;top:249.95px;font-size:9.0px;color:#333;transform:scaleX(0.95);-webkit-text-stroke:0.15px #333;">9</span>
<span class="t" style="left:-23.10px;width:60px;text-align:center;transform-origin:50% 50%;top:263.95px;font-size:9.0px;color:#333;transform:scaleX(0.95);-webkit-text-stroke:0.15px #333;">10</span>
<span class="t" style="left:-23.10px;width:60px;text-align:center;transform-origin:50% 50%;top:278.95px;font-size:9.0px;color:#333;transform:scaleX(0.95);-webkit-text-stroke:0.15px #333;">11</span>
<span class="t" style="left:-23.10px;width:60px;text-align:center;transform-origin:50% 50%;top:292.95px;font-size:9.0px;color:#333;transform:scaleX(0.95);-webkit-text-stroke:0.15px #333;">12</span>
<span class="t" style="left:-23.10px;width:60px;text-align:center;transform-origin:50% 50%;top:306.95px;font-size:9.0px;color:#333;transform:scaleX(0.95);-webkit-text-stroke:0.15px #333;">13</span>
<span class="t" style="left:-23.10px;width:60px;text-align:center;transform-origin:50% 50%;top:321.95px;font-size:9.0px;color:#333;transform:scaleX(0.95);-webkit-text-stroke:0.15px #333;">14</span>
<span class="t" style="left:-23.10px;width:60px;text-align:center;transform-origin:50% 50%;top:335.95px;font-size:9.0px;color:#333;transform:scaleX(0.95);-webkit-text-stroke:0.15px #333;">15</span>
<span class="t" style="left:-23.10px;width:60px;text-align:center;transform-origin:50% 50%;top:350.95px;font-size:9.0px;color:#333;transform:scaleX(0.95);-webkit-text-stroke:0.15px #333;">16</span>
<span class="t" style="left:-23.10px;width:60px;text-align:center;transform-origin:50% 50%;top:364.95px;font-size:9.0px;color:#333;transform:scaleX(0.95);-webkit-text-stroke:0.15px #333;">17</span>
<span class="t" style="left:-23.10px;width:60px;text-align:center;transform-origin:50% 50%;top:379.95px;font-size:9.0px;color:#333;transform:scaleX(0.95);-webkit-text-stroke:0.15px #333;">18</span>
<span class="t" style="left:-23.10px;width:60px;text-align:center;transform-origin:50% 50%;top:393.95px;font-size:9.0px;color:#333;transform:scaleX(0.95);-webkit-text-stroke:0.15px #333;">19</span>
<span class="t" style="left:-23.10px;width:60px;text-align:center;transform-origin:50% 50%;top:408.95px;font-size:9.0px;color:#333;transform:scaleX(0.95);-webkit-text-stroke:0.15px #333;">20</span>
<span class="t" style="left:-23.10px;width:60px;text-align:center;transform-origin:50% 50%;top:422.95px;font-size:9.0px;color:#333;transform:scaleX(0.95);-webkit-text-stroke:0.15px #333;">21</span>
<span class="t" style="left:-23.10px;width:60px;text-align:center;transform-origin:50% 50%;top:437.95px;font-size:9.0px;color:#333;transform:scaleX(0.95);-webkit-text-stroke:0.15px #333;">22</span>
<span class="t" style="left:-23.10px;width:60px;text-align:center;transform-origin:50% 50%;top:451.95px;font-size:9.0px;color:#333;transform:scaleX(0.95);-webkit-text-stroke:0.15px #333;">23</span>
<span class="t" id="t83" style="left:18.40px;top:132.75px;font-size:9.6px;color:#111;transform:scaleX(1.0133);-webkit-text-stroke:0.2px #111;">Full Name</span>
<span class="t" id="t84" style="left:18.40px;top:147.75px;font-size:9.6px;color:#111;transform:scaleX(1.0193);-webkit-text-stroke:0.2px #111;">Bibi Gardner</span>
<span class="t" id="t85" style="left:18.40px;top:162.75px;font-size:9.6px;color:#111;-webkit-text-stroke:0.2px #111;">Ebony Weiss</span>
<span class="t" id="t86" style="left:18.40px;top:176.75px;font-size:9.6px;color:#111;-webkit-text-stroke:0.2px #111;">Vinny Sparks</span>
<span class="t" id="t87" style="left:18.40px;top:191.75px;font-size:9.6px;color:#111;transform:scaleX(0.9902);-webkit-text-stroke:0.2px #111;">Hassan Finley</span>
<span class="t" id="t88" style="left:18.40px;top:205.75px;font-size:9.6px;color:#111;transform:scaleX(1.0664);-webkit-text-stroke:0.2px #111;">Antonio Nichols</span>
<span class="t" id="t89" style="left:18.40px;top:220.75px;font-size:9.6px;color:#111;-webkit-text-stroke:0.2px #111;">Orla Knapp</span>
<span class="t" id="t90" style="left:18.40px;top:234.75px;font-size:9.6px;color:#111;transform:scaleX(0.9841);-webkit-text-stroke:0.2px #111;">Farhan Owen</span>
<span class="t" id="t91" style="left:18.40px;top:249.75px;font-size:9.6px;color:#111;transform:scaleX(1.0450);-webkit-text-stroke:0.2px #111;">Aimee Hawkins</span>
<span class="t" id="t92" style="left:18.40px;top:263.75px;font-size:9.6px;color:#111;transform:scaleX(1.0373);-webkit-text-stroke:0.2px #111;">Johnathan Nixon</span>
<span class="t" id="t93" style="left:18.40px;top:278.75px;font-size:9.6px;color:#111;transform:scaleX(1.0456);-webkit-text-stroke:0.2px #111;">Maison Mcconnell</span>
<span class="t" id="t94" style="left:78.90px;top:465.30px;font-size:10.0px;color:#217346;font-weight:bold;transform:scaleX(0.8720);">Sheet1</span>
<span class="t" id="t95" style="left:3.70px;top:485.10px;font-size:8.2px;color:#333;transform:scaleX(1.0176);-webkit-text-stroke:0.15px #333;">Point</span>
<span class="t" id="t96" style="left:52.00px;top:485.90px;font-size:8.2px;color:#2a2a2a;transform:scaleX(1.0194);-webkit-text-stroke:0.15px #2a2a2a;">Accessibility: Good to go</span>
<span class="t" id="t97" style="left:957.50px;top:484.20px;font-size:8.4px;color:#b0b0b0;transform:scaleX(0.9336);">100%</span>
<span class="t" id="t98" style="left:431.90px;top:215.70px;font-size:9.8px;color:#000;transform:scaleX(0.8325);-webkit-text-stroke:0.18px #000;">Create Table</span>
<span class="t" id="t99" style="left:528.00px;top:216.90px;font-size:9.6px;color:#222;transform:scaleX(0.8234);">?</span>
<span class="t" id="t100" style="left:430.90px;top:237.80px;font-size:9.2px;color:#000;transform:scaleX(0.9145);-webkit-text-stroke:0.18px #000;"><u>W</u>here is the data for your table?</span>
<span class="t" id="t101" style="left:432.90px;top:252.30px;font-size:8.6px;color:#000;transform:scaleX(0.9085);-webkit-text-stroke:0.18px #000;">$A$1:$A$11</span>
<span class="t" id="t102" style="left:444.90px;top:267.80px;font-size:9.2px;color:#000;transform:scaleX(0.8935);-webkit-text-stroke:0.18px #000;"><u>M</u>y table has headers</span>
<span class="t" id="t103" style="left:481.60px;top:283.80px;font-size:9.2px;color:#000;transform:scaleX(0.8282);-webkit-text-stroke:0.18px #000;">OK</span>
<span class="t" id="t104" style="left:535.70px;top:283.80px;font-size:9.2px;color:#000;transform:scaleX(0.8249);-webkit-text-stroke:0.18px #000;">Cancel</span>
</div></body></html>
